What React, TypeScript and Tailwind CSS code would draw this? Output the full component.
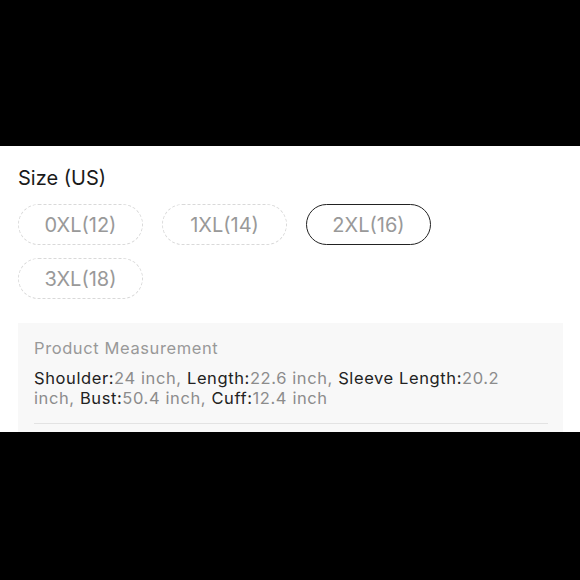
import { Fragment } from 'react'

const sizes = [
  { label: '0XL(12)', selected: false },
  { label: '1XL(14)', selected: false },
  { label: '2XL(16)', selected: true },
  { label: '3XL(18)', selected: false },
]

const measurements = [
  { name: 'Shoulder', value: '24 inch' },
  { name: 'Length', value: '22.6 inch' },
  { name: 'Sleeve Length', value: '20.2 inch' },
  { name: 'Bust', value: '50.4 inch' },
  { name: 'Cuff', value: '12.4 inch' },
]

export default function App() {
  return (
    <div className="flex h-[580px] w-[580px] flex-col bg-black font-['Inter','Liberation_Sans',sans-serif]">
      <div className="h-[146px] shrink-0" />

      <section className="flex h-[286px] shrink-0 flex-col overflow-hidden bg-white px-[18px] pt-[20px]">
        <h2 className="text-[20px] leading-[24px] text-[#1a1a1a]">Size (US)</h2>

        <div className="mt-[14px] flex flex-wrap gap-x-[19px] gap-y-[13px]">
          {sizes.map((s) => (
            <button
              key={s.label}
              className={
                s.selected
                  ? 'flex h-[41px] w-[125px] items-center justify-center rounded-full border-[1.5px] border-solid border-[#222] text-[20px] text-[#999]'
                  : 'flex h-[41px] w-[125px] items-center justify-center rounded-full border border-dashed border-[#d9d9d9] text-[20px] text-[#999]'
              }
            >
              {s.label}
            </button>
          ))}
        </div>

        <div className="mr-[-1px] mt-[24px] flex-1 bg-[#f8f8f8] pl-[16px] pr-[15px] pt-[15px]">
          <p className="text-[16.5px] leading-[20px] tracking-[0.6px] text-[#999]">Product Measurement</p>
          <p className="mt-[10px] pr-[30px] text-[16.5px] leading-[20px] tracking-[0.6px] text-[#8c8c8c]">
            {measurements.map((m, i) => (
              <Fragment key={m.name}>
                <b className="font-normal text-[#222]">{m.name}:</b>
                {m.value.split(' ').map((w, j) => (
                  <Fragment key={j}>
                    {j > 0 ? ' ' : ''}
                    <span>{w}</span>
                  </Fragment>
                ))}
                {i < measurements.length - 1 ? ', ' : ''}
              </Fragment>
            ))}
          </p>
          <div className="mt-[15px] h-px bg-[#e3e3e3]" />
        </div>
      </section>

      <div className="flex-1" />
    </div>
  )
}
